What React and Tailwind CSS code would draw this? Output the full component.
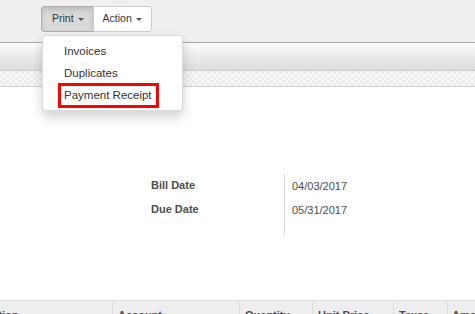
import React from 'react'

const FONT = "font-['Liberation_Sans',Arial,sans-serif]"

function Caret() {
  return (
    <span className="ml-[4px] inline-block h-0 w-0 border-x-[3px] border-t-[3px] border-x-transparent border-t-[#555] align-middle" />
  )
}

export default function App() {
  return (
    <div className={`relative h-[314px] w-[475px] overflow-hidden bg-white ${FONT}`}>
      {/* control panel */}
      <div className="h-[42px] bg-[#f0eeee] pl-[41px] pt-[6px]">
        <div className="flex h-[26px]">
          <button className="flex items-center rounded-l-[3px] border border-[#adadad] bg-[#d9d9d9] pl-[10px] pr-[9px] text-[10.5px] text-[#333] shadow-[inset_0_3px_5px_rgba(0,0,0,0.125)]">
            Print<Caret />
          </button>
          <button className="-ml-px flex items-center rounded-r-[3px] border border-[#ccc] bg-white pl-[9px] pr-[9px] text-[10.5px] text-[#333]">
            Action<Caret />
          </button>
        </div>
      </div>
      <div className="h-px bg-[#a9a9a9]" />
      <div className="h-[27px] bg-gradient-to-b from-[#fbfbfb] to-[#dcdcdc]" />
      <div className="h-px bg-[#cbcbcb]" />
      <div className="h-[15px] bg-[image:repeating-conic-gradient(#ececec_0%_25%,#f8f8f8_0%_50%)] bg-[length:6px_6px]" />
      <div className="h-px bg-[#cfcfd6]" />

      {/* dates */}
      <div className="ml-[151px] mt-[87px] flex text-[11px] leading-[24px] text-[#4c4c4c]">
        <div className="w-[133px] font-bold">
          <div className="-mt-px">Bill Date</div>
          <div>Due Date</div>
        </div>
        <div className="h-[62px] border-l border-[#d6d6d6] pl-[7px]">
          <div>04/03/2017</div>
          <div>05/31/2017</div>
        </div>
      </div>

      {/* table header */}
      <div className="mt-[64px] flex h-[30px] border-t border-[#dddddd] bg-[#eeeeee] text-[11px] font-bold leading-[13px] text-[#4c4c4c]">
        <div className="-ml-[48px] w-[160px] shrink-0 pl-[6px] pt-[8px]">Description</div>
        <div className="w-[127px] shrink-0 border-l border-[#dddddd] pl-[5px] pt-[8px]">Account</div>
        <div className="w-[73px] shrink-0 border-l border-[#dddddd] pl-[5px] pt-[8px]">Quantity</div>
        <div className="w-[81px] shrink-0 border-l border-[#dddddd] pl-[5px] pt-[8px]">Unit Price</div>
        <div className="w-[54px] shrink-0 border-l border-[#dddddd] pl-[5px] pt-[8px]">Taxes</div>
        <div className="w-[60px] shrink-0 border-l border-[#dddddd] pl-[4px] pt-[8px]">Amount</div>
      </div>

      {/* print dropdown */}
      <div className="absolute left-[42px] top-[35px] h-[76px] w-[141px] rounded-[4px] border border-[rgba(0,0,0,0.15)] bg-white py-[4px] text-[11.5px] leading-[22px] text-[#333] shadow-[0_6px_12px_rgba(0,0,0,0.175)]">
        <div className="pl-[21px]">Invoices</div>
        <div className="pl-[21px]">Duplicates</div>
        <div className="pl-[21px]">Payment Receipt</div>
        <div className="absolute left-[15px] top-[47px] h-[25px] w-[101px] border-[3px] border-[#ff0000]" />
      </div>
    </div>
  )
}
